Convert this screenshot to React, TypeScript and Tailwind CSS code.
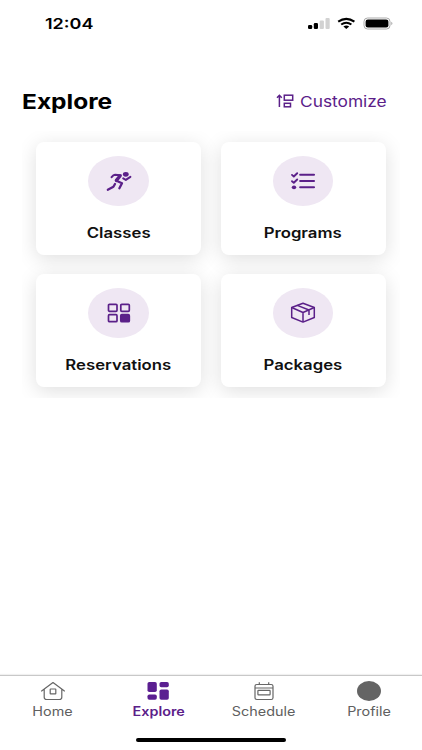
import type { ReactNode } from "react";

const PURPLE = "#5b2089";

function RunnerIcon() {
  return (
    <svg width="26" height="22" viewBox="0 0 26 22" fill="none" stroke={PURPLE} strokeLinecap="round" strokeLinejoin="round">
      <ellipse cx="19.8" cy="4.3" rx="2.9" ry="2.4" fill={PURPLE} stroke="none" />
      <path d="M5.6 7.2 Q7.4 4.9 9 4.8 L14.8 5.2" strokeWidth="2.1" />
      <path d="M14 6 L10.4 10.4" strokeWidth="3.4" />
      <path d="M10.4 10.8 L16 13.2 L13.4 18.2" strokeWidth="2.3" />
      <path d="M9 14 L7.4 16.8 L1.8 19.8" strokeWidth="2.3" />
      <path d="M17.2 8.4 L19.8 9.9 L24.4 6.8" strokeWidth="2" />
    </svg>
  );
}

function ListIcon() {
  return (
    <svg width="26" height="20" viewBox="0 0 26 20" fill="none" stroke={PURPLE} strokeLinecap="round" strokeLinejoin="round">
      <path d="M10.2 3.7H24M10.2 10H24M10.2 16.2H24" strokeWidth="2.1" />
      <path d="M2 3.9 L3.8 5.5 L7.2 2.2M2 10.2 L3.8 11.8 L7.2 8.5" strokeWidth="1.9" />
      <ellipse cx="4" cy="16.3" rx="2.2" ry="1.9" fill={PURPLE} stroke="none" />
    </svg>
  );
}

function TilesIcon() {
  return (
    <svg width="24" height="20" viewBox="0 0 24 20" fill="none" stroke={PURPLE} strokeWidth="1.7">
      <rect x="1.5" y="1.3" width="8.5" height="7" rx="1" />
      <rect x="13.8" y="1.3" width="8.5" height="7" rx="1" />
      <rect x="1.5" y="11.7" width="8.5" height="7" rx="1" />
      <rect x="13.8" y="11.7" width="8.5" height="7" rx="1" fill={PURPLE} />
    </svg>
  );
}

function BoxIcon() {
  return (
    <svg width="26" height="22" viewBox="0 0 26 22" fill="none" stroke={PURPLE} strokeWidth="1.5" strokeLinejoin="round">
      <path d="M13 1.2 L24.3 5.5 V15.5 L13 20.1 L1.7 15.5 V5.5 Z" />
      <path d="M1.7 5.5 L13 10.5 L24.3 5.5M13 10.5V20.1M7.3 3.4 L19 8V13" />
    </svg>
  );
}

function Card({ label, children }: { label: string; children: ReactNode }) {
  return (
    <div className="flex h-[113px] flex-col items-center rounded-lg bg-white pt-[14px] shadow-[0_4px_20px_rgba(0,0,0,0.13)]">
      <div className="flex h-[50px] w-[60.5px] items-center justify-center rounded-[50%] bg-[#efe7f3]">{children}</div>
      <span className="mt-[17px] scale-x-[1.195] text-sm leading-5 font-semibold whitespace-nowrap text-[#101010]">{label}</span>
    </div>
  );
}

function Tab({ label, className, children }: { label: string; className: string; children: ReactNode }) {
  return (
    <div className="flex flex-1 flex-col items-center">
      <div className="flex h-[22px] items-center">{children}</div>
      <span className={`mt-0.5 text-[12.5px] leading-4 whitespace-nowrap ${className}`}>{label}</span>
    </div>
  );
}

export default function App() {
  return (
    <div className="flex h-[750px] w-[422px] flex-col overflow-hidden bg-white font-['Inter','Liberation_Sans',sans-serif]">
      <header className="flex h-[46px] items-center justify-between pt-px pr-[28px] pl-[45px]">
        <span className="mt-0.5 origin-left scale-x-[1.2] text-[15px] font-semibold text-black">12:04</span>
        <svg width="86" height="16" viewBox="0 0 86 16">
          <rect x="0" y="9" width="4.2" height="4" rx="1.2" />
          <rect x="5.8" y="7" width="4.2" height="6" rx="1.2" />
          <rect x="11.7" y="4.5" width="4.2" height="8.5" rx="1" fill="#d2d2d2" />
          <rect x="17.5" y="2" width="4.2" height="11" rx="1" fill="#d2d2d2" />
          <g fill="none" stroke="#000" strokeWidth="2.1">
            <path d="M30.2 5.6 Q38.3 0.1 46.4 5.6" />
            <path d="M33.2 8.5 Q38.3 4.9 43.4 8.5" />
          </g>
          <path d="M35.4 10.6 Q38.3 8.6 41.2 10.6 L38.3 13.1Z" />
          <rect x="56" y="2" width="26" height="11" rx="3.5" fill="none" stroke="#aaa" />
          <rect x="57.6" y="3.5" width="22.8" height="8" rx="2.2" />
          <path d="M83.4 5.8 Q85.4 7.5 83.4 9.2Z" fill="#999" />
        </svg>
      </header>

      <main className="flex flex-1 flex-col">
        <div className="mt-[40px] flex h-[30px] items-center justify-between pr-[35px] pl-[22px]">
          <h1 className="mt-0.5 origin-left scale-x-[1.195] text-[20.5px] font-bold text-black">Explore</h1>
          <button className="flex items-center gap-1.5 text-[#5b2089]">
            <svg width="18" height="14" viewBox="0 0 18 14" fill="none" stroke="currentColor" strokeWidth="1.5">
              <path d="M3.4 13V1.3M1 3.7 L3.4 1.3 L5.8 3.7" />
              <rect x="8.3" y="1.2" width="8.4" height="5" />
              <rect x="8.3" y="9.3" width="6.2" height="3.5" />
            </svg>
            <span className="w-[87px] text-left">
              <span className="inline-block origin-left scale-x-[1.155] text-[15px] leading-5">Customize</span>
            </span>
          </button>
        </div>

        <section className="mt-[15px] ml-[22px] grid w-[378px] grid-cols-[165px_165px] gap-x-[19.5px] gap-y-[19.5px] overflow-hidden px-[14px] pt-[10.5px] pb-[11px]">
          <Card label="Classes"><RunnerIcon /></Card>
          <Card label="Programs"><ListIcon /></Card>
          <Card label="Reservations"><TilesIcon /></Card>
          <Card label="Packages"><BoxIcon /></Card>
        </section>
      </main>

      <nav className="flex h-[75px] flex-col items-center border-t border-[#c8c8c8] pt-[4px] shadow-[0_-1px_1px_rgba(0,0,0,0.06)]">
        <div className="flex w-full">
          <Tab label="Home" className="scale-x-[1.15] text-[#606060]">
            <svg width="26" height="20" viewBox="0 0 26 20" fill="none" stroke="#666" strokeWidth="1.2" strokeLinecap="round" strokeLinejoin="round">
              <path d="M1.6 10 L13 1.5 L24.4 10M4.2 8.2V16.3Q4.2 18.5 6.6 18.5H19.4Q21.8 18.5 21.8 16.3V8.2" />
              <rect x="10.2" y="8" width="5.6" height="4.8" rx="0.4" />
            </svg>
          </Tab>
          <Tab label="Explore" className="scale-x-[1.15] font-semibold text-[#5b2089]">
            <svg width="22" height="18" viewBox="0 0 22 18" fill="#5b1f91">
              <rect x="0.5" y="0" width="9.3" height="10" rx="1.8" />
              <rect x="12.5" y="0" width="9.3" height="5.2" rx="1.8" />
              <rect x="0.5" y="12.4" width="9.3" height="5.4" rx="1.8" />
              <rect x="12.5" y="7.5" width="9.3" height="10.3" rx="1.8" />
            </svg>
          </Tab>
          <Tab label="Schedule" className="scale-x-[1.15] text-[#606060]">
            <svg width="20" height="20" viewBox="0 0 20 20" fill="none" stroke="#666" strokeWidth="1.2">
              <rect x="1" y="3.5" width="18" height="15" rx="1.8" />
              <path d="M1 7H19M5.3 1.2V3.5M14.7 1.2V3.5" />
              <rect x="3.9" y="9.4" width="12.2" height="4.4" rx="0.6" />
            </svg>
          </Tab>
          <Tab label="Profile" className="scale-x-[1.15] text-[#606060]">
            <div className="h-5 w-6 rounded-[50%] bg-[#646464]" />
          </Tab>
        </div>
        <div className="mt-[18px] h-1 w-[150px] rounded-full bg-black" />
      </nav>
    </div>
  );
}
